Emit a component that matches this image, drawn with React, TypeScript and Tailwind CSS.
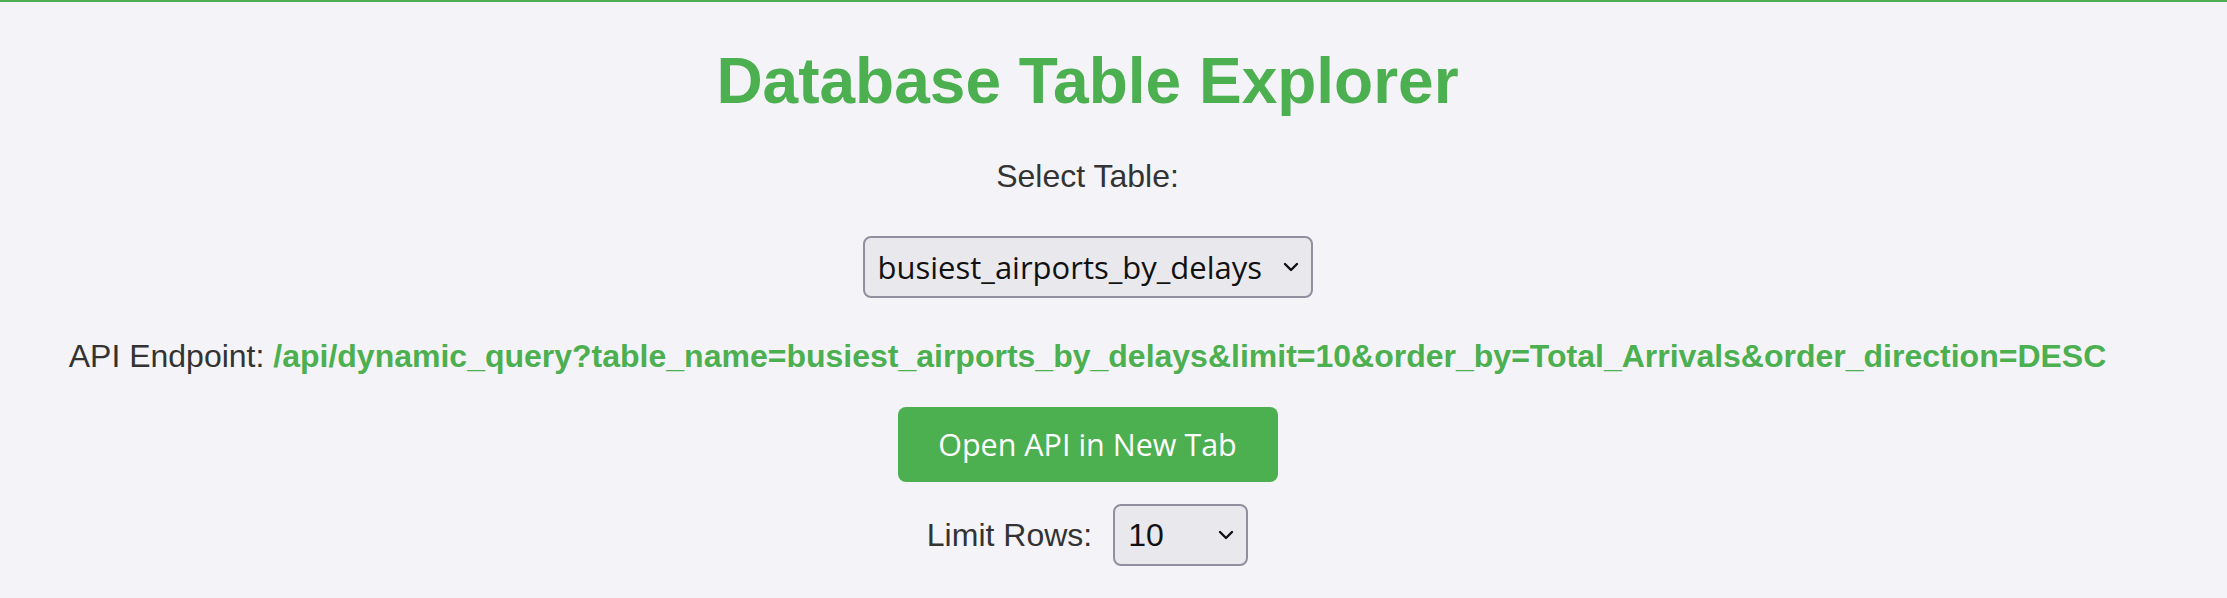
import React, { useState } from "react";

const GREEN = "text-[#4caf50]";

const Chevron = () => (
  <svg
    className="pointer-events-none absolute right-[14px] top-1/2 -translate-y-1/2"
    width="16"
    height="10"
    viewBox="0 0 16 10"
    fill="none"
    aria-hidden="true"
  >
    <path d="M2 2l6 6 6-6" stroke="#111" strokeWidth="2.4" strokeLinecap="round" strokeLinejoin="round" />
  </svg>
);

const App = () => {
  const [table, setTable] = useState("busiest_airports_by_delays");
  const [limit, setLimit] = useState("10");

  const endpoint = `/api/dynamic_query?table_name=${table}&limit=${limit}&order_by=Total_Arrivals&order_direction=DESC`;

  return (
    <div className="min-h-[598px] border-t-2 border-[#4caf50] bg-[#f4f4f8] font-['Liberation_Sans',Arial,sans-serif] text-[#333]">
      <div className="flex w-[2175px] flex-col items-center">
        <h1 className={`mt-[42px] text-[64px] leading-[74px] font-bold ${GREEN}`}>
          Database Table Explorer
        </h1>

        <label className="mt-[40px] text-[32px] leading-[37px]">Select Table:</label>

        <div className="relative mt-[41px]">
          <select
            value={table}
            onChange={(e) => setTable(e.target.value)}
            className="h-[62px] w-[450px] appearance-none rounded-[8px] border-2 border-[#8f8f9d] bg-[#e9e9ed] pl-[13px] font-['Open_Sans',sans-serif] text-[31px] text-[#111] outline-none"
          >
            <option>busiest_airports_by_delays</option>
            <option>airline_performance</option>
            <option>route_summary</option>
          </select>
          <Chevron />
        </div>

        <p className="mt-[40px] text-center text-[32px] leading-[37px] whitespace-nowrap">
          API Endpoint: <span className={`font-bold ${GREEN}`}>{endpoint}</span>
        </p>

        <button className="mt-[32px] flex h-[75px] w-[380px] items-center justify-center rounded-[8px] bg-[#4caf50] font-['Open_Sans',sans-serif] text-[30.5px] text-white">
          Open API in New Tab
        </button>

        <div className="mt-[22px] flex items-center gap-[21px]">
          <span className="text-[32px] leading-[37px]">Limit Rows:</span>
          <div className="relative">
            <select
              value={limit}
              onChange={(e) => setLimit(e.target.value)}
              className="h-[62px] w-[135px] appearance-none rounded-[8px] border-2 border-[#8f8f9d] bg-[#e9e9ed] pl-[13px] text-[32px] text-[#111] outline-none"
            >
              <option>10</option>
              <option>25</option>
              <option>50</option>
              <option>100</option>
            </select>
            <Chevron />
          </div>
        </div>
      </div>
    </div>
  );
};

export default App;
